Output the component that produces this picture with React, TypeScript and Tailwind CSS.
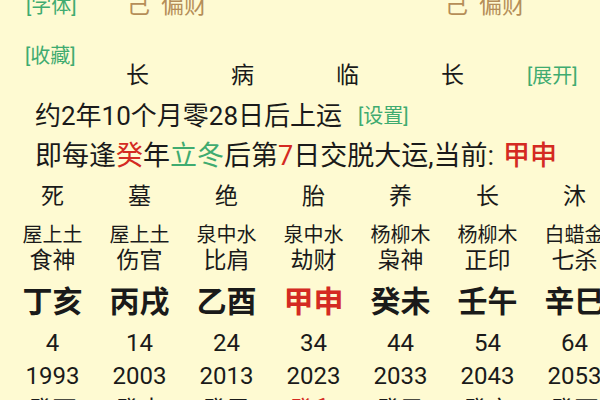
import React from "react";

const cols = [
  { ds: "死", ny: "屋上土", ss: "食神", gz: "丁亥", age: "4", yr: "1993", ln: "癸酉", red: false },
  { ds: "墓", ny: "屋上土", ss: "伤官", gz: "丙戌", age: "14", yr: "2003", ln: "癸未", red: false },
  { ds: "绝", ny: "泉中水", ss: "比肩", gz: "乙酉", age: "24", yr: "2013", ln: "癸巳", red: false },
  { ds: "胎", ny: "泉中水", ss: "劫财", gz: "甲申", age: "34", yr: "2023", ln: "癸卯", red: true },
  { ds: "养", ny: "杨柳木", ss: "枭神", gz: "癸未", age: "44", yr: "2033", ln: "癸丑", red: false },
  { ds: "长", ny: "杨柳木", ss: "正印", gz: "壬午", age: "54", yr: "2043", ln: "癸亥", red: false },
  { ds: "沐", ny: "白蜡金", ss: "七杀", gz: "辛巳", age: "64", yr: "2053", ln: "癸酉", red: false },
];

type Col = (typeof cols)[number];

function Row({ h, cls, red, render }: { h: string; cls: string; red?: boolean; render: (c: Col) => React.ReactNode }) {
  return (
    <div className={`grid grid-cols-[repeat(7,87px)] pl-[9px] ${h} ${cls}`}>
      {cols.map((c, i) => (
        <div key={i} className={`text-center whitespace-nowrap ${red && c.red ? "text-[#d42a22]" : ""}`}>
          {render(c)}
        </div>
      ))}
    </div>
  );
}

export default function App() {
  return (
    <div
      className="w-[600px] h-[400px] overflow-hidden bg-[#fefad2] text-[#1a1a1a]"
      style={{ fontFamily: '"Roboto", "Noto Sans CJK SC", sans-serif' }}
    >
      {/* top row, cut */}
      <div className="flex items-center h-[24px] mt-[-6px] leading-[24px] whitespace-nowrap">
        <span className="ml-[26px] w-[58px] text-[20px] text-[#3fab70]">[字体]</span>
        <span className="ml-[43px] text-[23px] text-[#b58e58]">己</span>
        <span className="ml-[11px] text-[23px] text-[#b58e58]">偏财</span>
        <span className="ml-[238px] text-[23px] text-[#b58e58]">己</span>
        <span className="ml-[11px] text-[23px] text-[#b58e58]">偏财</span>
      </div>

      {/* 收藏 + 长生 row */}
      <div className="flex h-[44px] mt-[26px] whitespace-nowrap">
        <span className="self-start w-[85px] pl-[25px] text-[20px] leading-[24px] text-[#3fab70]">[收藏]</span>
        {["长", "病", "临", "长"].map((t, i) => (
          <span key={i} className="self-end w-[105px] text-center text-[23px] leading-[24px]">
            {t}
          </span>
        ))}
        <span className="self-end ml-[22px] text-[20px] leading-[24px] text-[#3fab70]">[展开]</span>
      </div>

      {/* 起运 */}
      <div className="flex items-center h-[32px] mt-[12px] pl-[35px] leading-[32px] whitespace-nowrap">
        <span className="text-[26px]">约2年10个月零28日后上运</span>
        <span className="ml-[16px] text-[20px] text-[#3fab70]">[设置]</span>
      </div>

      {/* 交运 */}
      <div className="flex items-center h-[32px] mt-[8px] pl-[35px] leading-[32px] whitespace-nowrap text-[27px]">
        <span>即每逢</span>
        <span className="text-[#d42a22]">癸</span>
        <span>年</span>
        <span className="text-[#3fab70]">立冬</span>
        <span>后第</span>
        <span className="text-[#d42a22]">7</span>
        <span>日交脱大运,当前:</span>
        <span className="ml-[9px] text-[#d42a22] font-medium">甲申</span>
      </div>

      <Row h="h-[50px]" cls="leading-[50px] text-[23px]" render={(c) => c.ds} />
      <Row h="h-[26px]" cls="leading-[26px] text-[20px]" render={(c) => c.ny} />
      <Row h="h-[26px]" cls="leading-[26px] text-[23px]" render={(c) => c.ss} />
      <Row h="h-[56px]" cls="leading-[56px] text-[30px] font-bold" red render={(c) => c.gz} />
      <Row h="h-[26px]" cls="leading-[26px] text-[24px]" render={(c) => c.age} />
      <Row h="h-[40px]" cls="leading-[40px] text-[24px]" render={(c) => c.yr} />
      <Row h="h-[28px]" cls="leading-[28px] text-[24px]" red render={(c) => c.ln} />
    </div>
  );
}
